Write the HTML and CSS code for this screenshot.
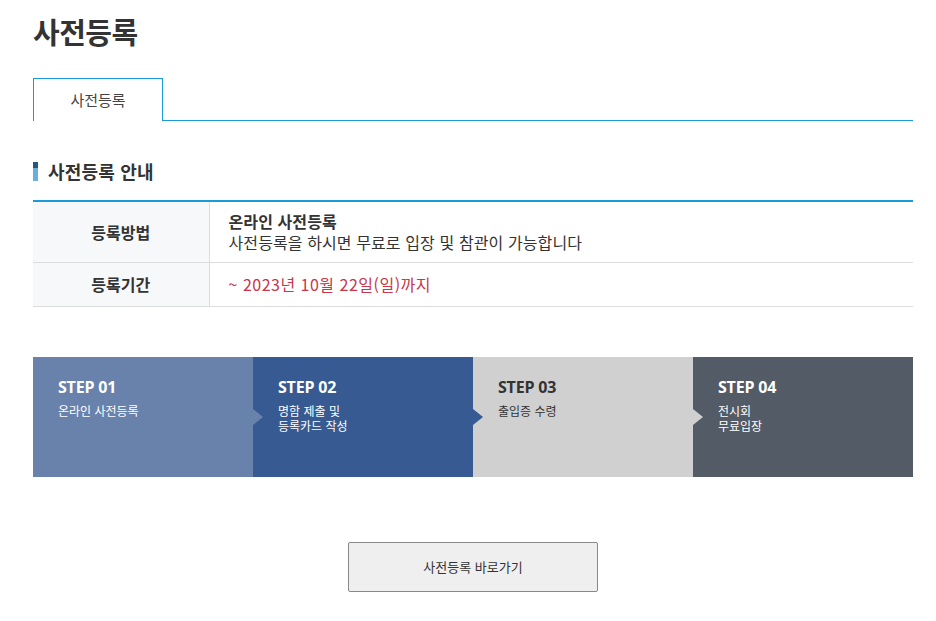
FILE: index.html
```html
<!DOCTYPE html>
<html lang="ko">
<head>
<meta charset="utf-8">
<title>사전등록</title>
<link rel="stylesheet" href="styles.css">
</head>
<body>
<div class="page">
  <h1 class="page-title">사전등록</h1>

  <div class="tabs">
    <div class="tab active">사전등록</div>
    <div class="tab-rest"></div>
  </div>

  <h2 class="sec-title"><span class="sec-mark"></span>사전등록 안내</h2>

  <table class="info">
    <tr class="row-method">
      <th>등록방법</th>
      <td><strong>온라인 사전등록</strong><br>사전등록을 하시면 무료로 입장 및 참관이 가능합니다</td>
    </tr>
    <tr class="row-period">
      <th>등록기간</th>
      <td class="red">~ 2023년 10월 22일(일)까지</td>
    </tr>
  </table>

  <div class="steps">
    <div class="step s1">
      <div class="step-no">STEP 01</div>
      <div class="step-txt">온라인 사전등록</div>
      <span class="arrow"></span>
    </div>
    <div class="step s2">
      <div class="step-no">STEP 02</div>
      <div class="step-txt">명함 제출 및<br>등록카드 작성</div>
      <span class="arrow"></span>
    </div>
    <div class="step s3">
      <div class="step-no">STEP 03</div>
      <div class="step-txt">출입증 수령</div>
      <span class="arrow"></span>
    </div>
    <div class="step s4">
      <div class="step-no">STEP 04</div>
      <div class="step-txt">전시회<br>무료입장</div>
    </div>
  </div>

  <div class="btn-wrap">
    <a class="btn" href="#">사전등록 바로가기</a>
  </div>
</div>
</body>
</html>
```

FILE: styles.css
```css
* { box-sizing: border-box; }

body {
  margin: 0;
  background: #fff;
  color: #333;
  font-family: "Noto Sans CJK KR", "Noto Sans", sans-serif;
}

.page {
  width: 880px;
  margin-left: 33px;
}

.page-title {
  margin: 0;
  padding-top: 12px;
  height: 78px;
  font-size: 29px;
  font-weight: 700;
  line-height: 38px;
  color: #333;
  letter-spacing: -0.5px;
}

/* tab strip */
.tabs {
  display: flex;
  height: 43px;
}
.tab {
  width: 130px;
  border: 1px solid #1a9ad6;
  border-bottom: 0;
  font-size: 15px;
  line-height: 42px;
  text-align: center;
  color: #444;
}
.tab-rest {
  flex: 1;
  border-bottom: 1px solid #1a9ad6;
}

/* section heading */
.sec-title {
  display: flex;
  align-items: center;
  margin: 39px 0 0;
  height: 22px;
  font-size: 18px;
  font-weight: 700;
  color: #333;
  letter-spacing: 0.2px;
}
.sec-mark {
  width: 5px;
  height: 19px;
  margin-right: 10px;
  background: linear-gradient(#24567f 0 6px, #6aaedb 6px);
}

/* info table */
.info {
  width: 100%;
  margin-top: 18px;
  border-collapse: collapse;
  border-top: 2px solid #1a9ad6;
  font-size: 16px;
}
.info th {
  width: 176px;
  background: #f7f8fa;
  border-right: 1px solid #ddd;
  border-bottom: 1px solid #ddd;
  font-weight: 700;
  color: #333;
  text-align: center;
}
.info td {
  border-bottom: 1px solid #ddd;
  padding: 0 0 0 19px;
  line-height: 21px;
  color: #333;
  letter-spacing: 0.1px;
}
.info td strong { font-weight: 700; }
.row-method th, .row-method td { height: 61px; }
.row-period th, .row-period td { height: 44px; }
.info td.red { color: #c8364a; letter-spacing: 0.5px; }

/* step flow */
.steps {
  display: grid;
  grid-template-columns: repeat(4, 1fr);
  margin-top: 50px;
  height: 120px;
}
.step {
  position: relative;
  padding: 20px 0 0 25px;
  color: #fff;
}
.step-no {
  font-family: "Open Sans", "Noto Sans", sans-serif;
  font-size: 16px;
  font-weight: 700;
  line-height: 20px;
  letter-spacing: -0.2px;
}
.step-txt {
  margin-top: 6px;
  font-size: 12px;
  line-height: 15px;
}
.s1 { background: #6882ac; }
.s2 { background: #365a91; }
.s3 { background: #d0d0d0; color: #333; }
.s4 { background: #525b66; }

.arrow {
  position: absolute;
  right: -10px;
  top: 52px;
  width: 0;
  height: 0;
  border-top: 8px solid transparent;
  border-bottom: 8px solid transparent;
  border-left: 10px solid;
  z-index: 1;
}
.s1 .arrow { border-left-color: #6882ac; }
.s2 .arrow { border-left-color: #365a91; }
.s3 .arrow { border-left-color: #d0d0d0; }

/* action button */
.btn-wrap {
  display: flex;
  justify-content: center;
  margin-top: 65px;
}
.btn {
  display: block;
  width: 250px;
  height: 50px;
  border: 1px solid #888;
  border-radius: 2px;
  background: #efefef;
  font-size: 13px;
  line-height: 48px;
  text-align: center;
  color: #333;
  text-decoration: none;
}
```
